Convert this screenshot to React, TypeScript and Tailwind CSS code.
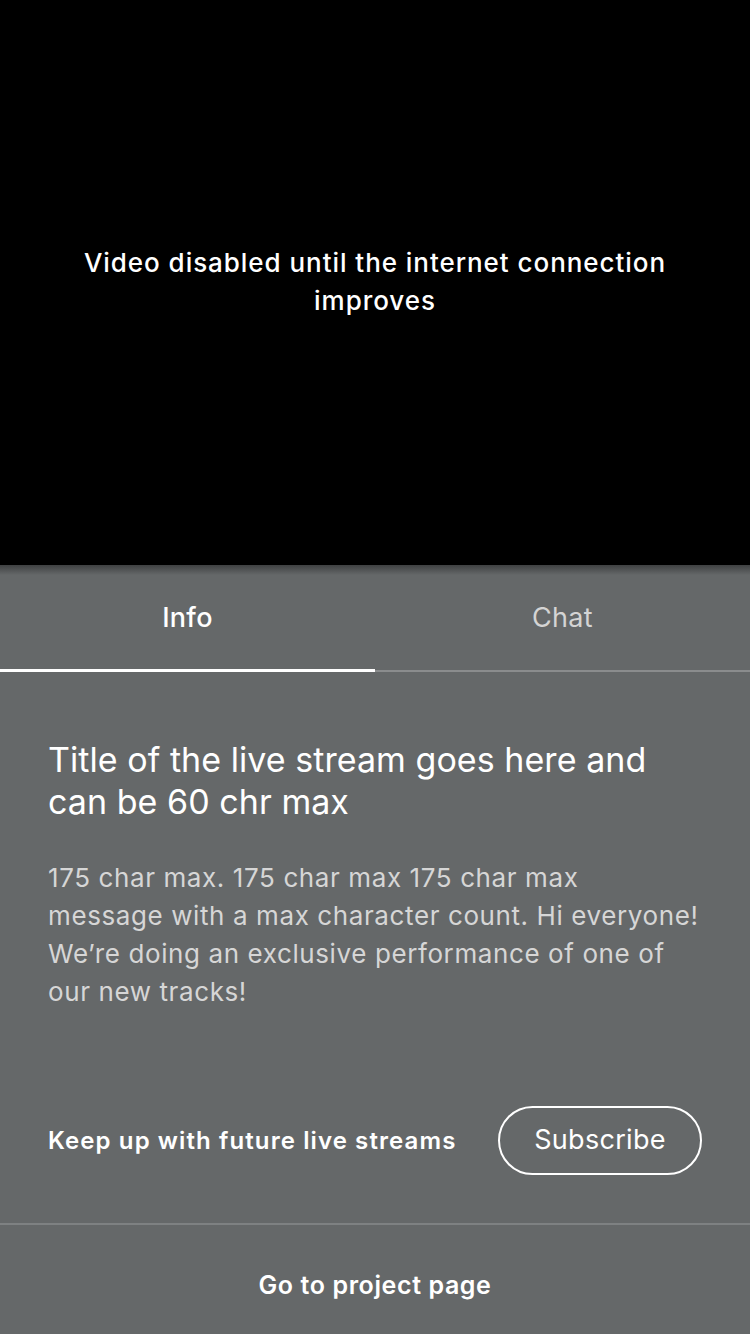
export default function App() {
  return (
    <div className="flex h-[1334px] w-[750px] flex-col overflow-hidden bg-[#656869] font-['Inter','Roboto',sans-serif] antialiased">
      {/* video area */}
      <div className="flex h-[565px] shrink-0 items-center justify-center bg-black px-[50px] pb-[2px]">
        <p className="text-center text-[26px] font-medium leading-[38px] tracking-[0.95px] text-white">
          Video disabled until the internet connection improves
        </p>
      </div>

      {/* tabs */}
      <div className="relative flex h-[107px] shrink-0 bg-[#656869]">
        <div className="pointer-events-none absolute inset-x-0 top-0 h-[10px] bg-gradient-to-b from-[#3f4142] to-transparent" />
        <div className="flex flex-1 flex-col">
          <div className="flex flex-1 items-center justify-center pt-[3px] text-[27px] font-medium tracking-[0.3px] text-white">Info</div>
          <div className="h-[3px] bg-white" />
        </div>
        <div className="flex flex-1 flex-col">
          <div className="flex flex-1 items-center justify-center pt-[3px] text-[27px] tracking-[0.3px] text-[#d4d4d4]">Chat</div>
          <div className="mt-[1px] h-[2px] bg-[#8a8c8d]" />
        </div>
      </div>

      {/* info content */}
      <div className="flex flex-1 flex-col">
        <div className="px-[48px] pt-[67px]">
          <h1 className="text-[34px] font-normal leading-[42px] tracking-[0.05px] text-white">
            Title of the live stream goes here and can be 60 chr max
          </h1>
          <p className="mt-[36px] text-[26px] leading-[38px] tracking-[0.6px] text-[#d6d6d6]">
            175 char max. 175 char max 175 char max
            <br />
            message with a max character count. Hi everyone!
            <br />
            We’re doing an exclusive performance of one of
            <br />
            our new tracks!
          </p>
        </div>

        <div className="mt-[95px] flex items-center justify-between px-[48px]">
          <span className="text-[24px] font-semibold tracking-[1.1px] text-white">Keep up with future live streams</span>
          <button className="flex h-[69px] w-[204px] items-center justify-center rounded-full border-2 border-white text-[27px] tracking-[0.3px] text-white">
            Subscribe
          </button>
        </div>

        <div className="mt-[48px] h-[2px] bg-[#7e8182]" />

        <div className="flex flex-1 items-center justify-center pt-[12px] text-[25px] font-semibold tracking-[0.6px] text-white">
          Go to project page
        </div>
      </div>
    </div>
  );
}
